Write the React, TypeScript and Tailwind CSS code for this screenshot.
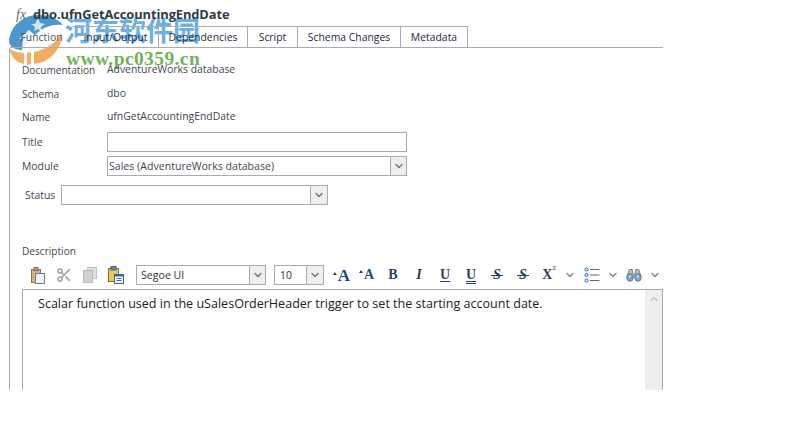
import { ChevronDown, ChevronUp, Scissors } from 'lucide-react';

const font = { fontFamily: '"Open Sans", "Noto Sans CJK SC", sans-serif' };
const serif = { fontFamily: '"Liberation Serif", serif' };

const tabs = [
    { label: 'Input/Output', width: 'w-[86px]' },
    { label: 'Dependencies', width: 'w-[89px]' },
    { label: 'Script', width: 'w-[50px]' },
    { label: 'Schema Changes', width: 'w-[103px]' },
    { label: 'Metadata', width: 'w-[67px]' },
];

function DropButton({ width }: { width: string }) {
    return (
        <div className={`${width} h-full bg-[#eeeeee] border-l border-[#ababab] flex items-center justify-center`}>
            <ChevronDown size={12} strokeWidth={3} className="text-[#777777]" />
        </div>
    );
}

function InfoRow({ label, value, height }: { label: string; value: string; height: string }) {
    return (
        <div className={`flex items-center ${height}`}>
            <span className="w-[85px] text-[10.1px] text-[#3f4650]">{label}</span>
            <span className="text-[10.4px] text-[#3f4650] -mt-[2px]">{value}</span>
        </div>
    );
}

function PasteIcon() {
    return (
        <svg width="15" height="17" viewBox="0 0 15 17" className="block">
            <rect x="0.5" y="2.5" width="9" height="13" fill="#dcb36c" stroke="#9a7434" />
            <rect x="3" y="0.5" width="4" height="3" fill="#a8a8a8" stroke="#6f6f6f" />
            <rect x="4.5" y="6.5" width="9" height="10" fill="#eef3fa" stroke="#5b82b8" />
        </svg>
    );
}

function CopyIcon() {
    return (
        <svg width="15" height="16" viewBox="0 0 15 16" className="block">
            <rect x="4.5" y="0.5" width="9" height="11" fill="#dedede" stroke="#c4c4c4" />
            <rect x="0.5" y="3.5" width="9" height="12" fill="#d2d2d2" stroke="#b8b8b8" />
        </svg>
    );
}

function PasteSpecialIcon() {
    return (
        <svg width="16" height="18" viewBox="0 0 16 18" className="block">
            <rect x="0.5" y="2.5" width="10" height="13" fill="#f2c648" stroke="#8f6c24" />
            <rect x="3" y="0.5" width="5" height="3.5" fill="#5f87bd" stroke="#3d628f" />
            <rect x="6.5" y="8.5" width="9" height="9" fill="#ffffff" stroke="#2f66ad" />
            <path d="M6.5 8.5h9v2h-9z" fill="#2f66ad" />
            <path d="M8.5 12.5h5M8.5 14.5h5" stroke="#2f66ad" />
        </svg>
    );
}

function ListIcon() {
    return (
        <svg width="16" height="16" viewBox="0 0 16 16" className="block">
            <circle cx="2.5" cy="2.5" r="1.6" fill="#dbe6f7" stroke="#3a6fc4" />
            <circle cx="2.5" cy="8" r="1.6" fill="#dbe6f7" stroke="#3a6fc4" />
            <circle cx="2.5" cy="13.5" r="1.6" fill="#dbe6f7" stroke="#3a6fc4" />
            <path d="M6 2.5h9.5M6 8h9.5M6 13.5h9.5" stroke="#666666" />
        </svg>
    );
}

function BinocularsIcon() {
    return (
        <svg width="16" height="14" viewBox="0 0 16 14" className="block">
            <path d="M1 9l2.2-7.5h3L7 6h2l.8-4.5h3L15 9z" fill="#b4bcc8" stroke="#7a838f" />
            <ellipse cx="4" cy="9.5" rx="3.2" ry="3.8" fill="#7fa6dc" stroke="#6a7482" />
            <ellipse cx="12" cy="9.5" rx="3.2" ry="3.8" fill="#7fa6dc" stroke="#6a7482" />
            <path d="M2.8 8.5h1.6M10.8 8.5h1.6" stroke="#eef4fb" strokeWidth="1.4" />
        </svg>
    );
}

function Caret() {
    return (
        <svg width="4" height="3" viewBox="0 0 4 3" className="mb-[9px] mr-[1px]">
            <path d="M0 3l2-3 2 3z" fill="#1f3f6d" />
        </svg>
    );
}

// strike line runs past the glyph, text-decoration would stop at its edges
function StruckGlyph() {
    return (
        <span className="relative w-[26px] flex justify-center italic text-[#2c3e5c]">
            S
            <span className="absolute left-[7px] w-[12px] top-[7px] h-px bg-[#2c3e5c]" />
        </span>
    );
}

function Logo() {
    return (
        <svg width="60" height="56" viewBox="0 0 60 56">
            <path d="M3 30C4 13 18 3 32 3c10 0 19 3 25 10-9-1-16 1-22 5-7 5-14 12-19 20-5 0-12-2-13-8z" fill="#3c8fca" opacity="0.92" />
            <path d="M16 38l1-12-4 1 10-9 9 8h-4v12z" fill="#ffffff" opacity="0.9" />
            <path d="M29 12l3-6 2 5 5 1-4 3 1 5-4-3-4 2 1-4-4-3z" fill="#ffffff" opacity="0.75" />
            <path d="M3 36c5 4 10 5 15 5v11c-8-1-13-8-15-16z" fill="#f2a654" opacity="0.92" />
            <path d="M28 40c11-2 22-9 28-19 1 12-9 25-19 29l-9 2z" fill="#f2a654" opacity="0.92" />
            <path d="M21 41l4-1v12l-4 1z" fill="#f2a654" opacity="0.92" />
        </svg>
    );
}

export default function App() {
    return (
        <div className="relative w-[802px] h-[448px] bg-white overflow-hidden text-[10.4px] leading-none" style={font}>
            {/* watermark sits behind the page text */}
            <div className="absolute left-[6px] top-[12px]"><Logo /></div>
            <div className="absolute left-[65px] top-[16px] text-[27px] font-bold text-[#57a8e6] opacity-90" style={{ fontFamily: '"Noto Sans CJK SC", sans-serif' }}>河东软件园</div>
            <div className="absolute left-[66px] top-[49px] text-[19.5px] font-bold text-[#6fb556] tracking-[0.4px]" style={serif}>www.pc0359.cn</div>

            <div className="relative z-10">
                <div className="h-[26px] flex items-center pl-[16px] pt-[3px] text-[#2f3a46]">
                    <span className="w-[17px] italic text-[14px] text-[#666666]" style={serif}>fx</span>
                    <span className="font-bold text-[12.9px] tracking-[-0.1px]">dbo.ufnGetAccountingEndDate</span>
                </div>

                <div className="ml-[10px] w-[653px] h-[22px] flex border-b border-[#ababab]">
                    <div className="w-[63px] h-[22px] flex items-center justify-center text-[#555555]">Function</div>
                    {tabs.map(t => (
                        <div
                            key={t.label}
                            className={`${t.width} h-[21px] flex items-center justify-center border-t border-r border-[#ababab] first:border-l text-[#1f2a44]`}
                        >
                            {t.label}
                        </div>
                    ))}
                </div>

                <div className="ml-[9px] w-[654px] h-[342px] border-l border-[#ababab] pl-[12px] pt-[10px]">
                    <InfoRow label="Documentation" value="AdventureWorks database" height="h-[24px]" />
                    <InfoRow label="Schema" value="dbo" height="h-[24px]" />
                    <InfoRow label="Name" value="ufnGetAccountingEndDate" height="h-[23px]" />

                    <div className="flex items-center h-[20px] mt-[3px]">
                        <span className="w-[85px] text-[#3f4650]">Title</span>
                        <div className="w-[300px] h-[20px] border border-[#ababab]" />
                    </div>

                    <div className="flex items-center h-[20px] mt-[4px]">
                        <span className="w-[85px] text-[#3f4650]">Module</span>
                        <div className="w-[300px] h-[20px] border border-[#ababab] flex items-center justify-between">
                            <span className="pl-[1px] text-[10.6px] text-[#3f4650]">Sales (AdventureWorks database)</span>
                            <DropButton width="w-[16px]" />
                        </div>
                    </div>

                    <div className="flex items-center h-[20px] mt-[9px] pl-[3px]">
                        <span className="w-[36px] text-[#3f4650]">Status</span>
                        <div className="w-[267px] h-[20px] border border-[#ababab] flex justify-end">
                            <DropButton width="w-[17px]" />
                        </div>
                    </div>

                    <div className="mt-[40px] h-[12px] flex items-center text-[10.1px] text-[#3f4650]">Description</div>

                    <div className="mt-[8px] h-[20px] flex items-center">
                        <div className="w-[9px]" />
                        <div className="w-[25px]"><PasteIcon /></div>
                        <div className="w-[27px] text-[#a6a6a6]"><Scissors size={16} strokeWidth={2.5} /></div>
                        <div className="w-[25px]"><CopyIcon /></div>
                        <div className="w-[28px]"><PasteSpecialIcon /></div>
                        <div className="w-[130px] h-[20px] border border-[#ababab] flex items-center justify-between">
                            <span className="pl-[4px] text-[10.6px] text-[#333333]">Segoe UI</span>
                            <DropButton width="w-[16px]" />
                        </div>
                        <div className="w-[8px]" />
                        <div className="w-[50px] h-[20px] border border-[#ababab] flex items-center justify-between">
                            <span className="pl-[5px] text-[#333333]">10</span>
                            <DropButton width="w-[17px]" />
                        </div>
                        <div className="w-[9px]" />
                        <div className="flex items-center font-bold text-[14px] text-[#2c3e5c]" style={serif}>
                            <span className="w-[20px] pr-[3px] flex items-end justify-center text-[17px] text-[#1f4a80]"><Caret />A</span>
                            <span className="w-[27px] flex items-end justify-center text-[14px] text-[#1f4a80]"><Caret />A</span>
                            <span className="w-[26px] flex justify-center">B</span>
                            <span className="w-[26px] flex justify-center italic">I</span>
                            <span className="w-[26px] flex justify-center underline underline-offset-2">U</span>
                            <span className="w-[26px] flex justify-center underline decoration-double underline-offset-2">U</span>
                            <StruckGlyph />
                            <StruckGlyph />
                            <span className="w-[26px] flex justify-center">X<sup className="text-[7px] text-[#b03030] mt-[3px]">2</sup></span>
                        </div>
                        <div className="w-[2px]" />
                        <ChevronDown size={12} strokeWidth={3} className="text-[#888888]" />
                        <div className="w-[8px]" />
                        <ListIcon />
                        <div className="w-[7px]" />
                        <ChevronDown size={12} strokeWidth={3} className="text-[#888888]" />
                        <div className="w-[7px]" />
                        <BinocularsIcon />
                        <div className="w-[7px]" />
                        <ChevronDown size={12} strokeWidth={3} className="text-[#888888]" />
                    </div>

                    <div className="mt-[4px] w-[641px] h-[101px] border-t border-l border-r border-[#ababab] flex justify-between">
                        <div className="pl-[15px] pt-[6px] text-[12.55px] leading-[16px] text-[#222222]">
                            Scalar function used in the uSalesOrderHeader trigger to set the starting account date.
                        </div>
                        <div className="w-[17px] h-full bg-[#eeeeee] flex justify-center pt-[3px]">
                            <ChevronUp size={12} strokeWidth={3} className="text-[#c8c8c8]" />
                        </div>
                    </div>
                </div>
            </div>
        </div>
    );
}
